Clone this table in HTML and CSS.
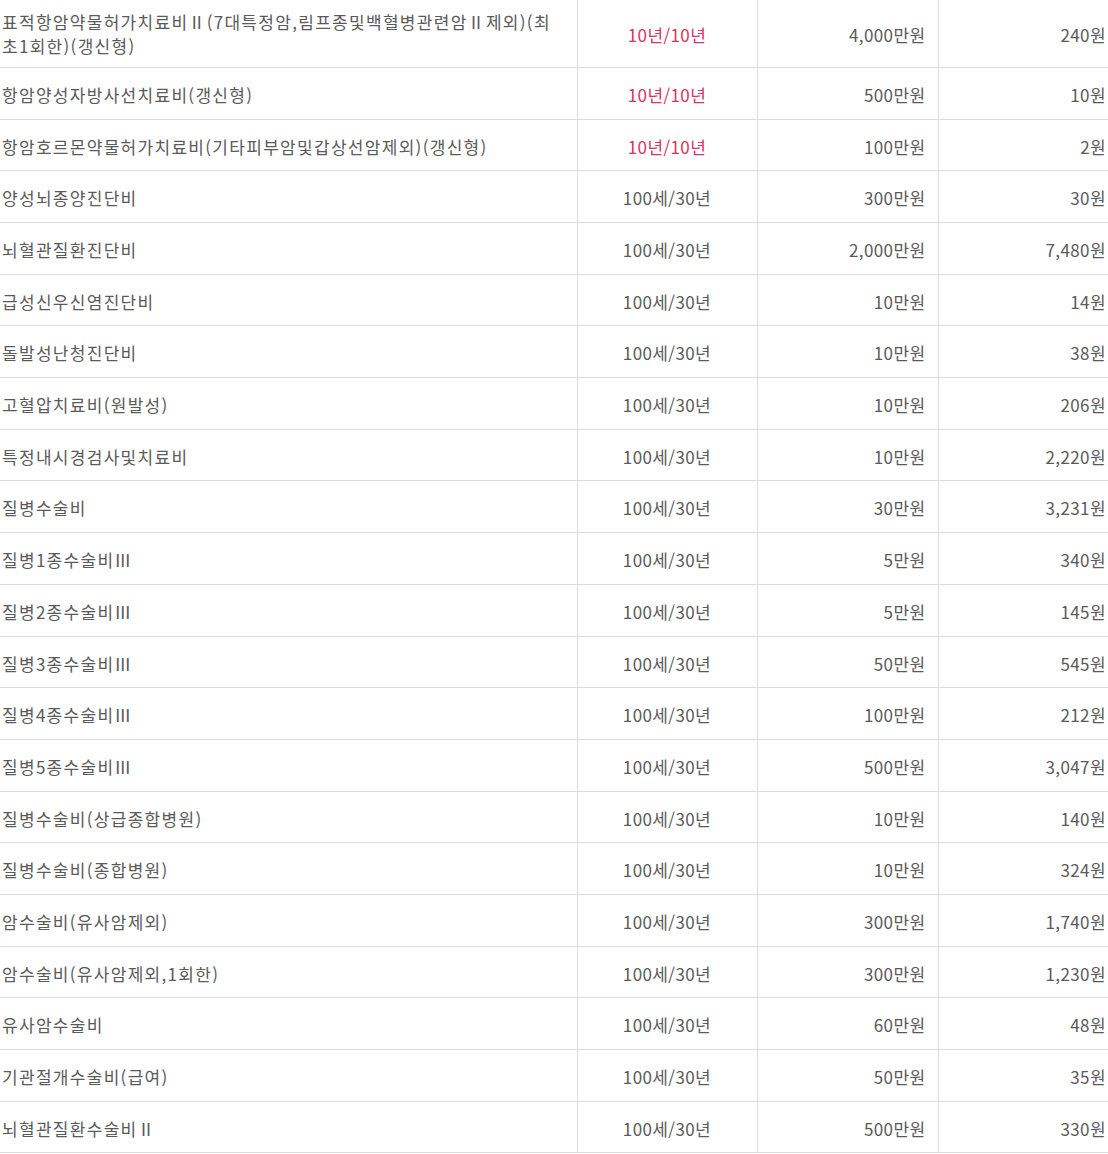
FILE: index.html
```html
<!DOCTYPE html>
<html lang="ko">
<head>
  <meta charset="UTF-8">
  <meta name="viewport" content="width=device-width, initial-scale=1.0">
  <title>보장내용</title>
  <link rel="stylesheet" href="styles.css">
</head>
<body>
  <table class="plan">
    <colgroup>
      <col class="c-name">
      <col class="c-term">
      <col class="c-amount">
      <col class="c-fee">
    </colgroup>
    <tbody>
      <tr><td class="wrap">표적항암약물허가치료비Ⅱ(7대특정암,림프종및백혈병관련암Ⅱ제외)(최<br>초1회한)(갱신형)</td><td class="term renew">10년/10년</td><td class="num">4,000만원</td><td class="num">240원</td></tr>
      <tr><td>항암양성자방사선치료비(갱신형)</td><td class="term renew">10년/10년</td><td class="num">500만원</td><td class="num">10원</td></tr>
      <tr><td>항암호르몬약물허가치료비(기타피부암및갑상선암제외)(갱신형)</td><td class="term renew">10년/10년</td><td class="num">100만원</td><td class="num">2원</td></tr>
      <tr><td>양성뇌종양진단비</td><td class="term">100세/30년</td><td class="num">300만원</td><td class="num">30원</td></tr>
      <tr><td>뇌혈관질환진단비</td><td class="term">100세/30년</td><td class="num">2,000만원</td><td class="num">7,480원</td></tr>
      <tr><td>급성신우신염진단비</td><td class="term">100세/30년</td><td class="num">10만원</td><td class="num">14원</td></tr>
      <tr><td>돌발성난청진단비</td><td class="term">100세/30년</td><td class="num">10만원</td><td class="num">38원</td></tr>
      <tr><td>고혈압치료비(원발성)</td><td class="term">100세/30년</td><td class="num">10만원</td><td class="num">206원</td></tr>
      <tr><td>특정내시경검사및치료비</td><td class="term">100세/30년</td><td class="num">10만원</td><td class="num">2,220원</td></tr>
      <tr><td>질병수술비</td><td class="term">100세/30년</td><td class="num">30만원</td><td class="num">3,231원</td></tr>
      <tr><td>질병1종수술비Ⅲ</td><td class="term">100세/30년</td><td class="num">5만원</td><td class="num">340원</td></tr>
      <tr><td>질병2종수술비Ⅲ</td><td class="term">100세/30년</td><td class="num">5만원</td><td class="num">145원</td></tr>
      <tr><td>질병3종수술비Ⅲ</td><td class="term">100세/30년</td><td class="num">50만원</td><td class="num">545원</td></tr>
      <tr><td>질병4종수술비Ⅲ</td><td class="term">100세/30년</td><td class="num">100만원</td><td class="num">212원</td></tr>
      <tr><td>질병5종수술비Ⅲ</td><td class="term">100세/30년</td><td class="num">500만원</td><td class="num">3,047원</td></tr>
      <tr><td>질병수술비(상급종합병원)</td><td class="term">100세/30년</td><td class="num">10만원</td><td class="num">140원</td></tr>
      <tr><td>질병수술비(종합병원)</td><td class="term">100세/30년</td><td class="num">10만원</td><td class="num">324원</td></tr>
      <tr><td>암수술비(유사암제외)</td><td class="term">100세/30년</td><td class="num">300만원</td><td class="num">1,740원</td></tr>
      <tr><td>암수술비(유사암제외,1회한)</td><td class="term">100세/30년</td><td class="num">300만원</td><td class="num">1,230원</td></tr>
      <tr><td>유사암수술비</td><td class="term">100세/30년</td><td class="num">60만원</td><td class="num">48원</td></tr>
      <tr><td>기관절개수술비(급여)</td><td class="term">100세/30년</td><td class="num">50만원</td><td class="num">35원</td></tr>
      <tr><td>뇌혈관질환수술비Ⅱ</td><td class="term">100세/30년</td><td class="num">500만원</td><td class="num">330원</td></tr>
    </tbody>
  </table>
</body>
</html>
```

FILE: styles.css
```css
body {
  margin: 0;
  padding: 0;
  font-family: "Noto Sans CJK KR", "Noto Sans", sans-serif;
  color: #5a5a5a;
  background: #fff;
  overflow: hidden;
}
.plan {
  width: 1108px;
  border-collapse: collapse;
  table-layout: fixed;
  font-size: 17px;
  line-height: 22px;
  letter-spacing: 0.4px;
}
.c-name { width: 577px; }
.c-term { width: 180px; }
.c-amount { width: 181px; }
.c-fee { width: 170px; }
.plan td {
  padding: 16px 2px 12.7px;
  border-bottom: 1px solid #ddd;
  border-left: 1px solid #ddd;
  vertical-align: middle;
}
.plan td:first-child {
  border-left: none;
  letter-spacing: 1.3px;
  white-space: nowrap;
}
.plan td.wrap {
  padding: 9.8px 2px 8px;
  line-height: 24.6px;
}
.plan .term {
  text-align: center;
}
.plan .num {
  text-align: right;
  padding-right: 12px;
}
.plan td:last-child {
  padding-right: 2px;
}
.renew {
  color: #d8325e;
}
```
